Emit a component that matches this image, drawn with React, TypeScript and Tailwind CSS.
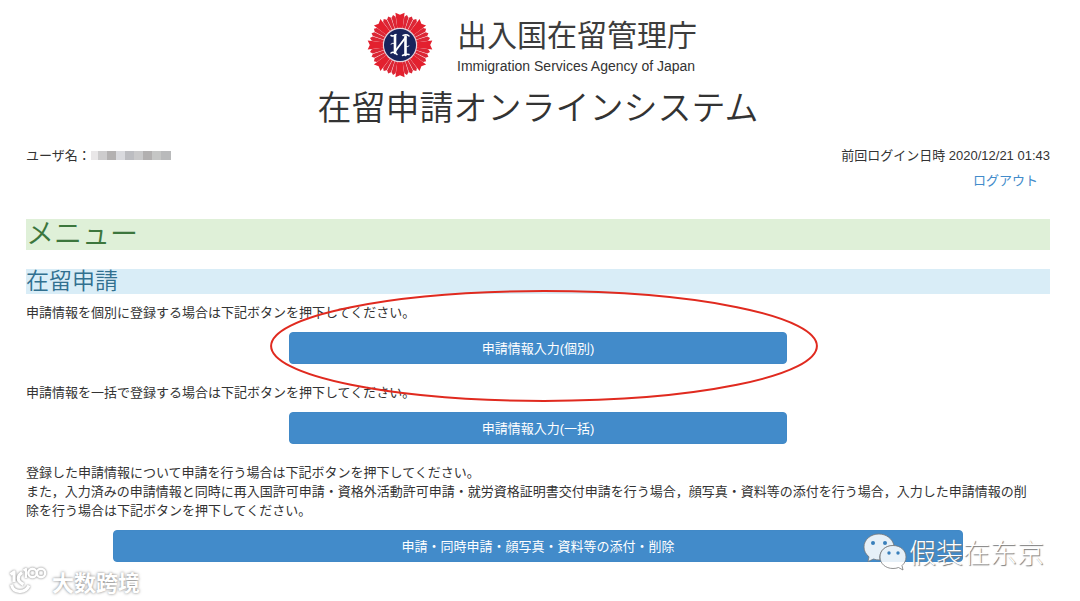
import React from "react";

const OCTANTS = [0, 45, 90, 135, 180, 225, 270, 315];
const SLIM_RAYS = [13, 22.5, 32];
const MOSAIC = [
  { w: "w-[7px]", c: "bg-[#e9e7e8]" },
  { w: "w-[9px]", c: "bg-[#cdcccd]" },
  { w: "w-[9px]", c: "bg-[#b3b1b1]" },
  { w: "w-[9px]", c: "bg-[#d9dade]" },
  { w: "w-[9px]", c: "bg-[#bcbdc1]" },
  { w: "w-[9px]", c: "bg-[#c9c9ca]" },
  { w: "w-[9px]", c: "bg-[#b2b0b0]" },
  { w: "w-[9px]", c: "bg-[#c5c6c5]" },
  { w: "w-[10px]", c: "bg-[#b9babb]" },
];

function Emblem() {
  return (
    <svg viewBox="-33 -33 66 66" className="size-[66px] shrink-0" aria-hidden="true">
      {OCTANTS.map((a) => (
        <g key={a} transform={`rotate(${a})`}>
          <path d="M-2.4 -15L-4.6 -32.3L0 -30.2L4.6 -32.3L2.4 -15Z" fill="#e3202e" />
          {SLIM_RAYS.map((b) => (
            <path
              key={b}
              transform={`rotate(${b})`}
              d="M-1.1 -15L-2.1 -28.500L0 -30.800L2.1 -28.500L1.1 -15Z"
              fill="#dc2635"
            />
          ))}
        </g>
      ))}
      <circle r="17.200" fill="#e6d3dc" />
      <circle r="16" fill="#18235b" />
      <g fill="none" stroke="#fff" strokeLinecap="round">
        <path d="M-5 -9.500V8M5.500 -8.500V10" strokeWidth="2.600" />
        <path d="M-5 6.500L5.500 -7.500" strokeWidth="1.900" />
        <path d="M-9 -9.500Q-6.500 -8 -4 -10.500M-9 8Q-6.500 6 -3 9.500M3 -9.500Q6.500 -11 9 -9M2.500 10.500Q6 8.500 9 9.500" strokeWidth="1.500" />
        <path d="M-9 -1Q-7 -3 -5 -1M5 1Q7 3 9 1" strokeWidth="0.900" />
      </g>
    </svg>
  );
}

function WeChatIcon() {
  return (
    <svg viewBox="0 0 44 40" className="h-10 w-11 shrink-0" aria-hidden="true">
      <g fill="#fff" fillOpacity="0.87" stroke="#777" strokeWidth="0.8">
        <path d="M16 2C7.500 2 1 7.700 1 15C1 19 3 22.500 6 24.800L5 29.500L10.500 27Q13 28 17 28C15.500 19 22 13.500 31 13.500C29.500 6.500 23 2 16 2Z" />
        <path d="M30 13.500C22.500 13.500 17 18.500 17 25C17 31.500 22.500 36.500 30 36.500Q33 36.500 35.500 35.500L40 38L39 33.500C41.500 31.500 43 28.500 43 25C43 18.500 37.500 13.500 30 13.500Z" />
      </g>
      <g fill="#397fbb">
        <circle cx="10" cy="11" r="2" />
        <circle cx="22" cy="11" r="2" />
        <circle cx="26" cy="21" r="1.700" />
        <circle cx="35" cy="21" r="1.700" />
      </g>
    </svg>
  );
}

function HundredIcon() {
  return (
    <svg viewBox="0 0 40 30" className="h-[30px] w-10 shrink-0 drop-shadow-[0_0_1px_#777]" aria-hidden="true">
      <g fill="none" stroke="#fff" strokeWidth="3.200" strokeLinejoin="round">
        <path d="M2.500 8.500L6 6V16" />
        <path d="M3.500 18.500C5 27 17 28 21 19.500" />
        <path d="M14 6.500C9 10 8.500 15 15.500 18.500" />
        <path d="M15.500 4.500L18 3V12" strokeWidth="2.400" />
        <circle cx="24.500" cy="7" r="4.200" strokeWidth="2.400" />
        <circle cx="33" cy="7" r="4.200" strokeWidth="2.400" />
      </g>
    </svg>
  );
}

function ActionButton({ children, wide = false }: { children: React.ReactNode; wide?: boolean }) {
  return (
    <button
      type="button"
      className={
        (wide ? "w-[calc(83.333%-4px)]" : "w-full") +
        " block h-8 rounded-sm border border-[#4189c7] bg-[#428bca] text-center text-white"
      }
    >
      {children}
    </button>
  );
}

export default function App() {
  return (
    <div className="relative min-h-screen bg-white pt-3 pr-[30px] pb-[38px] pl-[26px] font-['Liberation_Sans','Noto_Sans_CJK_JP',sans-serif] text-[13px] leading-[19px] text-[#333]">
      <header className="flex flex-col items-center">
        <div className="flex items-center gap-6 pr-3">
          <Emblem />
          <div className="pt-1.5">
            <p className="text-[30px] leading-9 text-[#3c3c3c]">出入国在留管理庁</p>
            <p className="text-[14px] leading-6">Immigration Services Agency of Japan</p>
          </div>
        </div>
        <h1 className="mt-[5px] text-[34px] leading-[50px] font-[350]">在留申請オンラインシステム</h1>
      </header>

      <div className="mt-[13px] flex items-start justify-between">
        <div className="flex items-center">
          <span>ユーザ名：</span>
          <span className="flex" role="img" aria-label="ユーザ名">
            {MOSAIC.map((m, i) => (
              <span key={i} className={`h-[9px] ${m.w} ${m.c}`} />
            ))}
          </span>
        </div>
        <div className="flex flex-col items-end gap-1.5">
          <p>前回ログイン日時 2020/12/21 01:43</p>
          <a href="#logout" className="mr-3 text-[#428bca]">ログアウト</a>
        </div>
      </div>

      <main>
        <h2 className="mt-[29px] bg-[#dff0d8] text-[28px] leading-[31px] font-[350] text-[#3c763d]">メニュー</h2>
        <h3 className="mt-[19px] bg-[#d9edf7] text-[23px] leading-[25px] font-[350] text-[#31708f]">在留申請</h3>

        <p className="mt-[9px]">申請情報を個別に登録する場合は下記ボタンを押下してください。</p>
        <div className="relative mx-auto mt-2.5 w-[calc(50%-14px)]">
          <ActionButton>申請情報入力(個別)</ActionButton>
          <div className="pointer-events-none absolute -top-[42px] -right-[31px] -left-[19px] h-[112px]">
            <svg className="size-full" aria-hidden="true">
              <ellipse cx="50%" cy="50%" rx="49.8%" ry="49%" fill="none" stroke="#e02a1f" strokeWidth="2" />
            </svg>
          </div>
        </div>

        <p className="mt-[19px]">申請情報を一括で登録する場合は下記ボタンを押下してください。</p>
        <div className="mx-auto mt-2.5 w-[calc(50%-14px)]">
          <ActionButton>申請情報入力(一括)</ActionButton>
        </div>

        <p className="mt-[19px]">
          登録した申請情報について申請を行う場合は下記ボタンを押下してください。
          <br />
          また，入力済みの申請情報と同時に再入国許可申請・資格外活動許可申請・就労資格証明書交付申請を行う場合，顔写真・資料等の添付を行う場合，入力した申請情報の削
          <br />
          除を行う場合は下記ボタンを押下してください。
        </p>
        <div className="mt-2.5 flex justify-center">
          <ActionButton wide>申請・同時申請・顔写真・資料等の添付・削除</ActionButton>
        </div>
      </main>

      <div className="absolute right-9 bottom-[29px] flex items-center gap-0.5">
        <WeChatIcon />
        <span className="font-['Noto_Sans_CJK_SC',sans-serif] text-[27px] leading-10 font-light text-white [text-shadow:1px_1px_1px_#777]">
          假装在东京
        </span>
      </div>
      <div className="absolute bottom-[5px] left-2 flex items-center gap-1">
        <HundredIcon />
        <span className="font-['Noto_Sans_CJK_SC',sans-serif] text-[22px] leading-[30px] font-bold text-white [text-shadow:0_0_3px_#777]">
          大数跨境
        </span>
      </div>
    </div>
  );
}
